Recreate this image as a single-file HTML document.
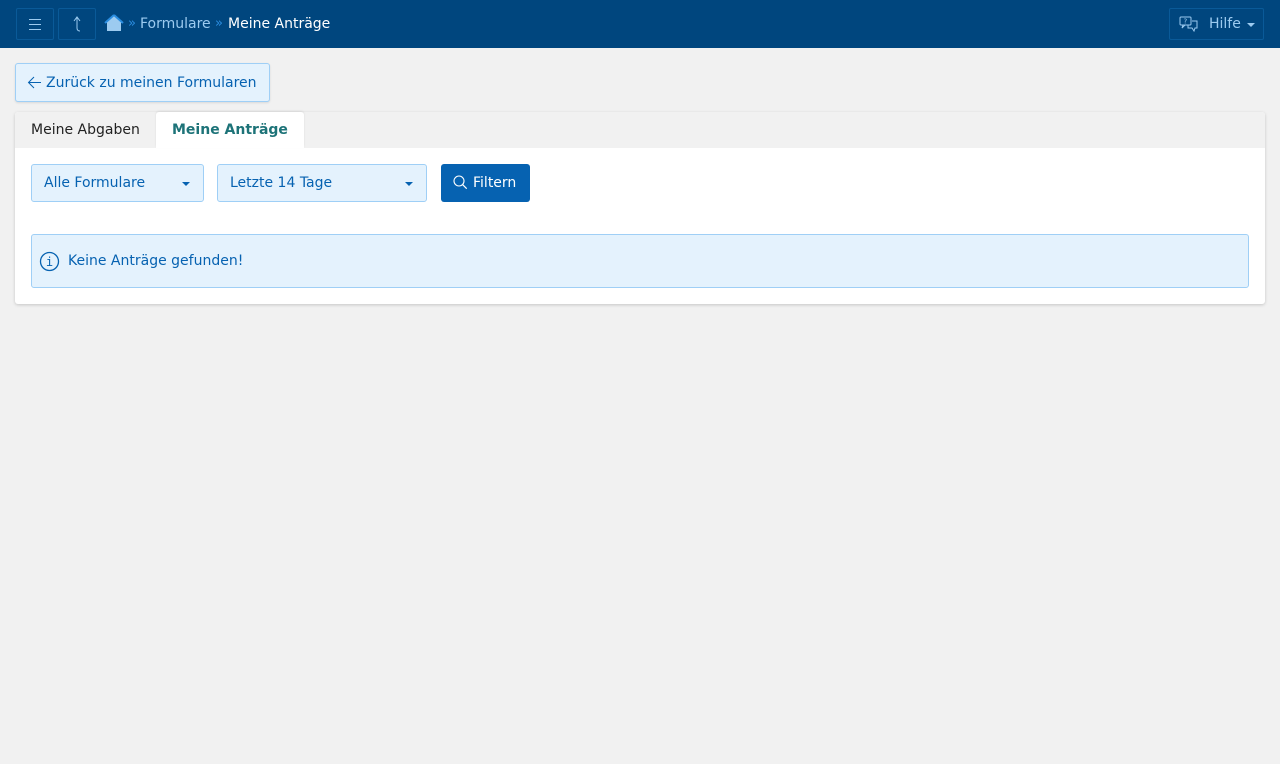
<!DOCTYPE html>
<html><head><meta charset="utf-8"><style>
*{box-sizing:border-box;margin:0;padding:0}
body{width:1280px;height:764px;background:#f1f1f1;font-family:"DejaVu Sans",sans-serif;font-size:14px;position:relative;overflow:hidden}
.top{position:absolute;left:0;top:0;width:1280px;height:48px;background:#00467e}
.tb{position:absolute;top:8px;height:32px;border:1px solid #0a5a98;border-radius:2px}
.abs{position:absolute;white-space:nowrap}
.back{position:absolute;left:15px;top:63px;width:255px;height:39px;background:#e4f2fd;border:1px solid #9fcff6;border-radius:3px;color:#0662b1;box-shadow:0 1px 2px rgba(0,0,0,.1)}
.card{position:absolute;left:15px;top:112px;width:1250px;height:192px;background:#fff;border-radius:3px;box-shadow:0 1px 3px rgba(0,0,0,.18)}
.tabs{position:absolute;left:0;top:0;width:1250px;height:36px;background:#f1f1f1;border-radius:3px 3px 0 0}
.sel{position:absolute;top:52px;height:38px;background:#e4f2fd;border:1px solid #9fcff6;border-radius:3px;color:#0662b1}
.caret{position:absolute;top:17px;width:0;height:0;border-left:4px solid transparent;border-right:4px solid transparent;border-top:4px solid #0662b1}
</style></head><body>
<div class="top">
 <div class="tb" style="left:16px;width:38px"><svg width="36" height="30" viewBox="0 0 36 30"><path d="M12 10.5h12M12 15.5h12M12 20.5h12" stroke="#9ccbf0" stroke-width="0.9"/></svg></div>
 <div class="tb" style="left:58px;width:38px"><svg width="36" height="30" viewBox="0 0 36 30"><path d="M15 12l3-4 3 4M18 8v11c0 2 1 3 3 3" fill="none" stroke="#9ccbf0" stroke-width="1"/></svg></div>
 <svg class="abs" style="left:104px;top:14px" width="20" height="18" viewBox="0 0 20 18"><path d="M10 1L1 9h2v8h14V9h2z" fill="#9ccbf0"/><path d="M10 1L1 9M10 1l9 8" stroke="#2a8de0" stroke-width="2" fill="none"/></svg>
 <div class="abs" style="left:128px;top:16px;color:#2a8de0;font-size:13px">»</div>
 <div class="abs" style="left:140px;top:16px;color:#9ccbf0">Formulare</div>
 <div class="abs" style="left:215px;top:16px;color:#2a8de0;font-size:13px">»</div>
 <div class="abs" style="left:228px;top:16px;color:#fff">Meine Anträge</div>
 <div class="tb" style="left:1169px;width:95px">
  <svg class="abs" style="left:9px;top:7px" width="20" height="16" viewBox="0 0 20 16"><rect x="1" y="1" width="11" height="8" rx="1" fill="none" stroke="#9ccbf0"/><path d="M4 9l-1 3 3-3" fill="none" stroke="#9ccbf0"/><path d="M13 5h5v7h-2l-1 3-2-3h-4v-3" fill="none" stroke="#9ccbf0"/><text x="4.5" y="7.5" font-size="7" fill="#9ccbf0" font-family="DejaVu Sans">?</text></svg>
  <div class="abs" style="left:39px;top:7px;color:#9ccbf0">Hilfe</div>
  <div class="caret" style="left:77px;top:14px;border-top-color:#9ccbf0"></div>
 </div>
</div>
<div class="back">
 <svg class="abs" style="left:11px;top:11px" width="15" height="15" viewBox="0 0 15 15"><path d="M7 2L1.5 7.5 7 13M1.5 7.5H14" fill="none" stroke="#0662b1" stroke-width="1"/></svg>
 <div class="abs" style="left:30px;top:11px">Zurück zu meinen Formularen</div></div>
<div class="card">
 <div class="tabs"></div>
 <div class="abs" style="left:16px;top:10px;color:#222">Meine Abgaben</div>
 <div class="abs" style="left:141px;top:0;width:148px;height:36px;background:#fff;border-radius:3px 3px 0 0;box-shadow:0 -1px 2px rgba(0,0,0,.08)"></div>
 <div class="abs" style="left:157px;top:10px;color:#1d7378;font-weight:bold">Meine Anträge</div>
 <div class="sel" style="left:16px;width:173px"><div class="abs" style="left:12px;top:10px">Alle Formulare</div><div class="caret" style="left:150px"></div></div>
 <div class="sel" style="left:202px;width:210px"><div class="abs" style="left:12px;top:10px">Letzte 14 Tage</div><div class="caret" style="left:187px"></div></div>
 <div class="abs" style="left:426px;top:52px;width:89px;height:38px;background:#0662b1;border-radius:3px;color:#fff">
  <svg class="abs" style="left:12px;top:11px" width="15" height="15" viewBox="0 0 15 15"><circle cx="6" cy="6" r="5" fill="none" stroke="#fff" stroke-width="1.1"/><path d="M9.7 9.7l4 4" stroke="#fff" stroke-width="1.2"/></svg>
  <div class="abs" style="left:32px;top:11px">Filtern</div></div>
 <div class="abs" style="left:16px;top:122px;width:1218px;height:54px;background:#e4f2fd;border:1px solid #9fcff6;border-radius:3px;color:#0662b1">
  <svg class="abs" style="left:7px;top:16px" width="21" height="21" viewBox="0 0 21 21"><circle cx="10.5" cy="10.5" r="9" fill="none" stroke="#0662b1" stroke-width="1.3"/><text x="10.5" y="15" font-size="12" text-anchor="middle" fill="#0662b1" font-family="DejaVu Sans Mono">i</text></svg>
  <div class="abs" style="left:36px;top:18px">Keine Anträge gefunden!</div>
 </div>
</div>
</body></html>
